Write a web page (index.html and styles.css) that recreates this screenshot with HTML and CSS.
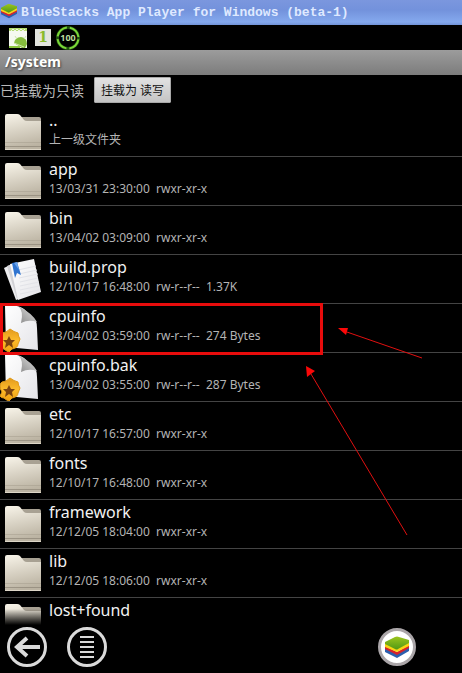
FILE: index.html
```html
<!DOCTYPE html>
<html lang="zh-CN">
<head>
  <meta charset="UTF-8" />
  <meta name="viewport" content="width=device-width, initial-scale=1" />
  <title>BlueStacks App Player for Windows (beta-1)</title>
  <link rel="stylesheet" href="styles.css">
</head>
<body>
  <!-- shared icons -->
  <svg class="sprite" aria-hidden="true">
    <defs>
      <linearGradient id="folder-front" x1="0" y1="0" x2="0.2" y2="1">
        <stop offset="0" stop-color="#f8f4e9" />
        <stop offset="0.5" stop-color="#d9d3c5" />
        <stop offset="1" stop-color="#bbb3a2" />
      </linearGradient>
      <linearGradient id="paper" x1="0" y1="0" x2="1" y2="1">
        <stop offset="0" stop-color="#ffffff" />
        <stop offset="1" stop-color="#e4e4e8" />
      </linearGradient>
      <linearGradient id="fold" x1="0" y1="1" x2="1" y2="0">
        <stop offset="0" stop-color="#8a8a8a" />
        <stop offset="1" stop-color="#e4e4e4" />
      </linearGradient>
      <linearGradient id="gold" x1="0" y1="0" x2="0" y2="1">
        <stop offset="0" stop-color="#e39a1d" />
        <stop offset="0.5" stop-color="#fdbb2b" />
        <stop offset="1" stop-color="#f0a010" />
      </linearGradient>
      <linearGradient id="leaf" x1="0" y1="0" x2="0" y2="1">
        <stop offset="0" stop-color="#9cc41e" />
        <stop offset="1" stop-color="#4f9a14" />
      </linearGradient>
    </defs>
    <symbol id="icon-folder" viewBox="0 0 48 48">
      <path d="M18 9H39Q41 9 41 11V20H18Z" fill="#a8a193" />
      <path d="M5 42V8Q5 6 7 6H17Q19 6 20 7L24 12Q25 13 27 13H41V42Z" fill="url(#folder-front)" />
      <path d="M5 34.500H41" stroke="#a59d8d" opacity="0.5" />
      <path d="M5 38.500H41" stroke="#857d6f" opacity="0.6" />
      <path d="M5 41.500H41" stroke="#ddd6c7" />
    </symbol>
    <symbol id="icon-text" viewBox="0 0 48 48">
      <path d="M4 13L12 9L28 40L16 45Z" fill="#ededef" />
      <path d="M7 11L12 9L21 40L17 44Z" fill="#d2d2d6" />
      <path d="M10 9L34 4L41 37L18 45Z" fill="url(#paper)" />
      <path d="M18 15L36 11M19 19L37 15M19 23L38 19M20 27L38 23M20 31L39 27M20 35L39 31M20 39L39 35" stroke="#e2e3e8" />
      <path d="M12 8L17 7L21 20L17 18L15 23Z" fill="#2f74d0" />
      <path d="M14 8L17 7L19 15Z" fill="#69a2ea" />
    </symbol>
    <symbol id="icon-script" viewBox="0 0 48 48">
      <path d="M5 2H17Q21 3 24 5L36 17Q37 20 37 24L38 46L6 43Z" fill="url(#paper)" />
      <path d="M18 2Q24 7 21 19Q29 15 37 18Q32 9 18 2Z" fill="url(#fold)" />
      <path d="M10 25Q14 28 18 29Q18 32 20 35Q19 38 18 40Q18 44 12 45L9 48Q6 47 4 45Q1 45 0 43L2 39Q0 36 0 33Q0 30 2 29Q6 29 10 25Z" fill="url(#gold)" stroke="#e09a18" stroke-width="1" />
      <path d="M9 32L11 36L15 36L12 39L13 44L9 41L5 44L6 39L3 36L7 36Z" fill="#7a4310" />
    </symbol>
    <symbol id="icon-stack" viewBox="0 0 24 22">
      <path d="M0 12L12 18L24 11V15L12 22L0 16Z" fill="#2c5fae" />
      <path d="M0 10L12 16L24 9V12L12 19L0 13Z" fill="#d8232a" />
      <path d="M0 7L12 13L24 6V10L12 16L0 11Z" fill="#fbd514" />
      <path d="M0 6L10 1Q12 0 14 1L24 4V7L13 13Q12 14 10 13L0 8Z" fill="url(#leaf)" />
    </symbol>
  </svg>

  <header class="titlebar">
    <svg class="titlebar-logo" aria-hidden="true"><use href="#icon-stack" /></svg>
    <span>BlueStacks App Player for Windows (beta-1)</span>
  </header>

  <div class="statusbar">
    <svg class="status-icon" viewBox="0 0 18 22" aria-hidden="true">
      <path d="M0 1H18V21H0Z" fill="#f6f9f0" />
      <path d="M0 1H18V4H0Z" fill="#b5dc72" />
      <path d="M2 4L4 2L6 4L8 2L10 4L12 2L14 4L16 2" fill="none" stroke="#eef6df" />
      <path d="M5 16Q6 10 12 10Q18 11 18 17L16 21H13Z" fill="#86bd3d" />
      <path d="M5 16L15 20M8 12L6 9M15 12L17 9" stroke="#cfe6ac" />
      <path d="M0 19H11V21H0Z" fill="#8cc63f" />
    </svg>
    <span class="badge-one">1</span>
    <svg class="battery" viewBox="0 0 24 24" role="img" aria-label="100">
      <circle cx="12" cy="12" r="10.500" fill="none" stroke="#1f4d10" stroke-width="3" />
      <circle cx="12" cy="12" r="10.500" fill="none" stroke="#7bd638" stroke-width="2" stroke-dasharray="13.500 3" stroke-dashoffset="-1.500" />
      <text x="12" y="15" text-anchor="middle">100</text>
    </svg>
  </div>

  <h1 class="path">/system</h1>

  <div class="mount">
    <span>已挂载为只读</span>
    <button type="button" class="mount-btn">挂载为 读写</button>
  </div>

  <main class="files">
    <a class="row" href="#">
      <svg class="icon" aria-hidden="true"><use href="#icon-folder" /></svg>
      <span class="name">..</span>
      <span class="meta">上一级文件夹</span>
    </a>
    <a class="row" href="#">
      <svg class="icon" aria-hidden="true"><use href="#icon-folder" /></svg>
      <span class="name">app</span>
      <span class="meta">13/03/31 23:30:00  rwxr-xr-x</span>
    </a>
    <a class="row" href="#">
      <svg class="icon" aria-hidden="true"><use href="#icon-folder" /></svg>
      <span class="name">bin</span>
      <span class="meta">13/04/02 03:09:00  rwxr-xr-x</span>
    </a>
    <a class="row" href="#">
      <svg class="icon" aria-hidden="true"><use href="#icon-text" /></svg>
      <span class="name">build.prop</span>
      <span class="meta">12/10/17 16:48:00  rw-r--r--  1.37K</span>
    </a>
    <a class="row marked" href="#">
      <svg class="icon" aria-hidden="true"><use href="#icon-script" /></svg>
      <span class="name">cpuinfo</span>
      <span class="meta">13/04/02 03:59:00  rw-r--r--  274 Bytes</span>
      <svg class="arrows" viewBox="0 0 130 240" aria-hidden="true">
        <path d="M122 54L44 27M107 231L11 70" fill="none" stroke="#e01010" stroke-width="1" />
        <path d="M38 24L48 24L46 31Z" fill="#fb0808" />
        <path d="M6 62L15 67L7 73Z" fill="#fb0808" />
      </svg>
    </a>
    <a class="row" href="#">
      <svg class="icon" aria-hidden="true"><use href="#icon-script" /></svg>
      <span class="name">cpuinfo.bak</span>
      <span class="meta">13/04/02 03:55:00  rw-r--r--  287 Bytes</span>
    </a>
    <a class="row" href="#">
      <svg class="icon" aria-hidden="true"><use href="#icon-folder" /></svg>
      <span class="name">etc</span>
      <span class="meta">12/10/17 16:57:00  rwxr-xr-x</span>
    </a>
    <a class="row" href="#">
      <svg class="icon" aria-hidden="true"><use href="#icon-folder" /></svg>
      <span class="name">fonts</span>
      <span class="meta">12/10/17 16:48:00  rwxr-xr-x</span>
    </a>
    <a class="row" href="#">
      <svg class="icon" aria-hidden="true"><use href="#icon-folder" /></svg>
      <span class="name">framework</span>
      <span class="meta">12/12/05 18:04:00  rwxr-xr-x</span>
    </a>
    <a class="row" href="#">
      <svg class="icon" aria-hidden="true"><use href="#icon-folder" /></svg>
      <span class="name">lib</span>
      <span class="meta">12/12/05 18:06:00  rwxr-xr-x</span>
    </a>
    <a class="row" href="#">
      <svg class="icon" aria-hidden="true"><use href="#icon-folder" /></svg>
      <span class="name">lost+found</span>
    </a>
  </main>

  <nav class="navbar">
    <button type="button" class="nav-btn" aria-label="返回">
      <svg viewBox="0 0 40 40" aria-hidden="true">
        <circle cx="20" cy="20" r="18.500" />
        <path d="M33 20H11M20 11L10 20L20 29" stroke-width="4" />
      </svg>
    </button>
    <button type="button" class="nav-btn" aria-label="菜单">
      <svg viewBox="0 0 40 40" aria-hidden="true">
        <circle cx="20" cy="20" r="18.500" />
        <path class="bars" d="M13 10H27M13 15H27M13 20H27M13 25H27M13 30H27" />
      </svg>
    </button>
    <button type="button" class="nav-btn home" aria-label="BlueStacks">
      <svg class="home-logo" aria-hidden="true"><use href="#icon-stack" /></svg>
    </button>
  </nav>
</body>
</html>
```
FILE: styles.css
```css
*, *::after {
  box-sizing: border-box;
}

body {
  display: flex;
  flex-direction: column;
  height: 100vh;
  margin: 0;
  overflow: hidden;
  background-color: #000;
  color: #f2f2f2;
  font-family: "Noto Sans", "Noto Sans CJK SC", sans-serif;
  font-size: 12px;
}

button {
  font-family: inherit;
  cursor: pointer;
}

.sprite {
  position: absolute;
  width: 0;
  height: 0;
}

/* Window title */
.titlebar {
  display: flex;
  align-items: center;
  gap: 4px;
  flex: none;
  height: 25px;
  padding: 0 1px;
  background: linear-gradient(#7b97de, #7392dc 40%, #85a9ee 88%, #7193d8);
  color: #dfe9ff;
  font-family: "Liberation Mono", monospace;
  font-size: 13px;
  font-weight: bold;
  white-space: nowrap;
}

.titlebar-logo {
  width: 16px;
  height: 16px;
  margin-bottom: 4px;
}

/* Android status bar */
.statusbar {
  display: flex;
  align-items: center;
  gap: 8px;
  flex: none;
  height: 25px;
  padding-left: 9px;
}

.status-icon {
  width: 18px;
  height: 22px;
}

.badge-one {
  width: 16px;
  height: 17px;
  background-color: #e2e4de;
  color: #8abb2c;
  font-family: "DejaVu Serif", serif;
  font-size: 14px;
  font-weight: bold;
  line-height: 17px;
  text-align: center;
}

.battery {
  width: 24px;
  height: 24px;
  margin-left: -3px;
}

.battery text {
  fill: #b9dc9c;
  font-size: 9px;
  font-weight: bold;
}

.path {
  flex: none;
  height: 25px;
  margin: 0;
  padding-left: 5px;
  background: linear-gradient(#9c9c9c, #7c7c7c);
  color: #fff;
  font-size: 14px;
  font-weight: bold;
  line-height: 24px;
  text-shadow: 1px 1px 2px #444;
}

.mount {
  display: flex;
  align-items: center;
  gap: 10px;
  flex: none;
  height: 33px;
  padding-bottom: 4px;
  color: #b8b8b8;
  font-size: 14px;
}

.mount-btn {
  height: 26px;
  padding: 0 6px;
  border: 1px solid #a8a8a8;
  border-radius: 1px;
  background: linear-gradient(#e2e2e2, #c4c4c4);
  color: #111;
  font-size: 12px;
}

/* File list */
.files {
  position: relative;
  flex: 1;
  min-height: 0;
  overflow: hidden;
}

.files::after {
  content: "";
  position: absolute;
  bottom: 0;
  left: 0;
  width: 48px;
  height: 16px;
  background: linear-gradient(transparent, #000);
}

.row {
  display: grid;
  grid-template-columns: 48px 1fr;
  grid-template-rows: 24px 24px;
  column-gap: 1px;
  position: relative;
  border-bottom: 1px solid #444;
  color: #f2f2f2;
  text-decoration: none;
  white-space: pre;
}

.icon {
  grid-row: 1 / 3;
  width: 48px;
  height: 48px;
}

.name {
  padding-top: 1px;
  font-size: 16px;
  line-height: 22px;
}

.meta {
  color: #b4b4b4;
  font-size: 12px;
  line-height: 16px;
}

/* Red marker round the edited file, with its arrows */
.marked {
  z-index: 1;
}

.marked::after {
  content: "";
  position: absolute;
  top: -1px;
  left: 0;
  width: 323px;
  height: 52px;
  border: 3px solid #e80c0c;
}

.arrows {
  position: absolute;
  top: 0;
  left: 300px;
  width: 130px;
  height: 240px;
}

/* Bottom navigation */
.navbar {
  display: flex;
  gap: 20px;
  flex: none;
  height: 48px;
  padding: 2px 46px 6px 7px;
}

.nav-btn {
  width: 40px;
  height: 40px;
  padding: 0;
  border: none;
  border-radius: 50%;
  background: none;
}

.nav-btn svg {
  display: block;
  fill: none;
  stroke: #dadada;
  stroke-width: 3px;
}

.nav-btn .bars {
  stroke-width: 2px;
}

.nav-btn.home {
  display: grid;
  place-items: center;
  width: 38px;
  height: 38px;
  margin: 1px 0 0 auto;
  border: 3px solid #aaa5a8;
  background-color: #fff;
}

.nav-btn .home-logo {
  width: 24px;
  height: 22px;
  stroke: none;
}
```
